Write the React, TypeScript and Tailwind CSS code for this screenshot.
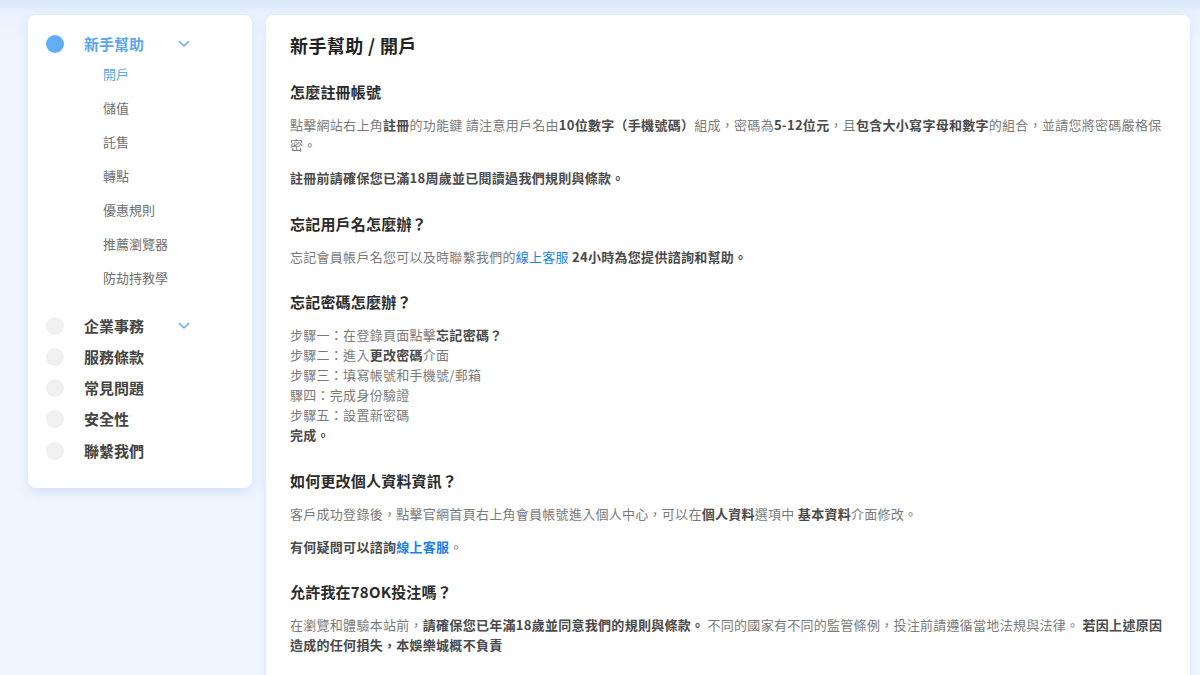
import React from "react";

const FONT = { fontFamily: '"Noto Sans CJK TC", "Noto Sans", sans-serif' };

function Chevron() {
  return (
    <svg width="12" height="8" viewBox="0 0 12 8" fill="none" className="block">
      <path d="M1.5 1.5 L6 6 L10.5 1.5" stroke="#6aaef0" strokeWidth="1.6" strokeLinecap="round" strokeLinejoin="round" />
    </svg>
  );
}

const subItems = ["開戶", "儲值", "託售", "轉點", "優惠規則", "推薦瀏覽器", "防劫持教學"];
const groups = [
  { t: "企業事務", chev: true },
  { t: "服務條款" },
  { t: "常見問題" },
  { t: "安全性" },
  { t: "聯繫我們" },
];

function B({ children }: { children: React.ReactNode }) {
  return <span className="font-bold text-[#4a4a4a]">{children}</span>;
}
function L({ children, bold }: { children: React.ReactNode; bold?: boolean }) {
  return <span className={"text-[#1b7fe3] " + (bold ? "font-bold" : "")}>{children}</span>;
}

function H({ children }: { children: React.ReactNode }) {
  return <h3 className="text-[15px] leading-[22px] font-bold text-[#2b2b2b] mb-[12px] tracking-[0.2px]">{children}</h3>;
}
function P({ children, last }: { children: React.ReactNode; last?: boolean }) {
  return (
    <p className={"text-[13px] leading-[20px] text-[#7a7a7a] tracking-[0.28px] " + (last ? "" : "mb-[13px]")}>
      {children}
    </p>
  );
}

export default function App() {
  return (
    <div
      style={FONT}
      className="w-[1200px] h-[675px] overflow-hidden bg-[linear-gradient(to_bottom,#d9e8fb_0px,#eaf2fe_14px,#f0f6ff_40px)]"
    >
      <div className="flex items-start gap-[14px] pl-[28px] pt-[15px]">
        {/* Sidebar */}
        <aside className="w-[224px] bg-white rounded-[8px] shadow-[0_4px_12px_rgba(120,165,235,0.28)] pt-[19px] pb-[22px] pl-[18px]">
          <div className="flex items-center h-[20px]">
            <span className="w-[18px] h-[18px] rounded-full bg-[#62aef5] shrink-0" />
            <span className="ml-[20px] w-[94px] text-[15px] font-bold text-[#5aa6ec] leading-[20px]">新手幫助</span>
            <Chevron />
          </div>
          <div className="mt-[3px] pl-[57px]">
            {subItems.map((s, i) => (
              <div
                key={s}
                className={"h-[34px] flex items-center text-[13px] " + (i === 0 ? "text-[#5aa6ec]" : "text-[#6f6f6f]")}
              >
                {s}
              </div>
            ))}
          </div>
          <div className="mt-[15px]">
            {groups.map((g) => (
              <div key={g.t} className="flex items-center h-[31.25px]">
                <span className="w-[18px] h-[18px] rounded-full bg-[#f0f0f0] shrink-0" />
                <span className="ml-[20px] w-[94px] text-[15px] font-bold text-[#444] leading-[20px]">{g.t}</span>
                {g.chev ? <Chevron /> : null}
              </div>
            ))}
          </div>
        </aside>

        {/* Main */}
        <main className="w-[924px] h-[700px] bg-white rounded-[8px] shadow-[0_4px_12px_rgba(120,165,235,0.2)] px-[24px] pt-[18px]">
          <h1 className="text-[18px] leading-[24px] font-bold text-[#222] mb-[24px] tracking-[0.4px]">新手幫助 / 開戶</h1>

          <section>
            <H>怎麼註冊帳號</H>
            <P>
              點擊網站右上角<B>註冊</B>的功能鍵 請注意用戶名由<B>10位數字（手機號碼）</B>組成，密碼為<B>5-12位元</B>，且<B>包含大小寫字母和數字</B>的組合，並請您將密碼嚴格保密。
            </P>
            <P last>
              <B>註冊前請確保您已滿18周歲並已閱讀過我們規則與條款。</B>
            </P>
          </section>

          <section className="mt-[25px]">
            <H>忘記用戶名怎麼辦？</H>
            <P last>
              忘記會員帳戶名您可以及時聯繫我們的<L>線上客服</L> <B>24小時為您提供諮詢和幫助。</B>
            </P>
          </section>

          <section className="mt-[24px]">
            <H>忘記密碼怎麼辦？</H>
            <div className="text-[13px] leading-[20px] text-[#7a7a7a] tracking-[0.28px]">
              <div>步驟一：在登錄頁面點擊<B>忘記密碼？</B></div>
              <div>步驟二：進入<B>更改密碼</B>介面</div>
              <div>步驟三：填寫帳號和手機號/郵箱</div>
              <div>驟四：完成身份驗證</div>
              <div>步驟五：設置新密碼</div>
              <div><B>完成。</B></div>
            </div>
          </section>

          <section className="mt-[25px]">
            <H>如何更改個人資料資訊？</H>
            <P>
              客戶成功登錄後，點擊官網首頁右上角會員帳號進入個人中心，可以在<B>個人資料</B>選項中 <B>基本資料</B>介面修改。
            </P>
            <P last>
              <B>有何疑問可以諮詢</B><L bold>線上客服</L>。
            </P>
          </section>

          <section className="mt-[24px]">
            <H>允許我在78OK投注嗎？</H>
            <P last>
              在瀏覽和體驗本站前，<B>請確保您已年滿18歲並同意我們的規則與條款。</B> 不同的國家有不同的監管條例，投注前請遵循當地法規與法律。 <B>若因上述原因造成的任何損失，本娛樂城概不負責</B>
            </P>
          </section>
        </main>
      </div>
    </div>
  );
}
